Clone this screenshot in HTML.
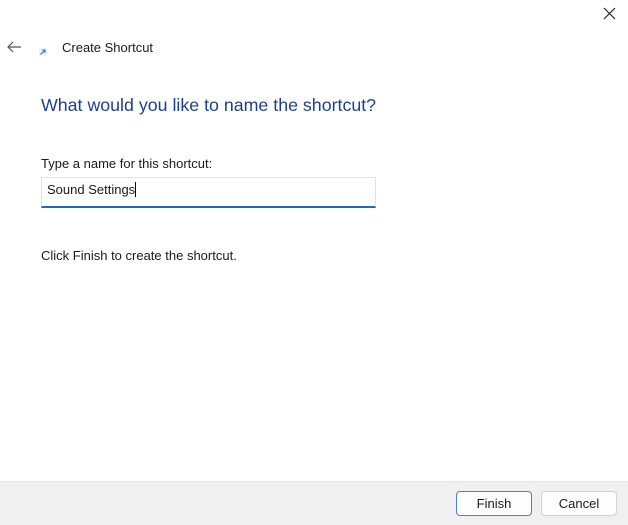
<!DOCTYPE html>
<html><head><style>
body{margin:0;width:628px;height:524px;background:#fff;position:relative;overflow:hidden;font-family:"Segoe UI","Liberation Sans",sans-serif;color:#1a1a1a}
.a{position:absolute}
.t{font-size:13px;white-space:nowrap}
.footer{left:0;top:481px;width:628px;height:43px;background:#f0f0f0;border-top:1px solid #e3e3e3}
.btn{top:491px;width:74px;height:23px;border:1px solid #d0d0d0;border-radius:4px;background:#fdfdfd;font-size:13px;text-align:center;line-height:24px}
</style></head><body>
<svg class="a" style="left:603px;top:7px" width="14" height="14"><path d="M1 1L12 12M12 1L1 12" stroke="#222" stroke-width="1.2"/></svg>
<svg class="a" style="left:7px;top:41px" width="15" height="12"><path d="M14 6H1M6 1L1 6L6 11" stroke="#555" stroke-width="1.2" fill="none"/></svg>
<svg class="a" style="left:39px;top:48px" width="8" height="8"><rect x="0" y="0" width="8" height="8" fill="#eef3fb"/><path d="M1.5 6.5L6 2M3 2H6V5" stroke="#2a6fd0" stroke-width="1.1" fill="none"/></svg>
<div class="a t" style="left:62px;top:40px">Create Shortcut</div>
<div class="a" style="left:41px;top:95px;font-size:17.8px;color:#1c3f94;white-space:nowrap">What would you like to name the shortcut?</div>
<div class="a t" style="left:41px;top:156px">Type a name for this shortcut:</div>
<div class="a" style="left:41px;top:177px;width:333px;height:28px;border:1px solid #e2e2e2;border-bottom:2px solid #1f67c2;background:#fff"></div>
<div class="a t" style="left:47px;top:182px">Sound Settings<span style="display:inline-block;width:1px;height:15px;background:#000;vertical-align:-3px"></span></div>
<div class="a t" style="left:41px;top:248px">Click Finish to create the shortcut.</div>
<div class="a footer"></div>
<div class="a btn" style="left:456px;border-color:#3f86d6">Finish</div>
<div class="a btn" style="left:541px">Cancel</div>
</body></html>
